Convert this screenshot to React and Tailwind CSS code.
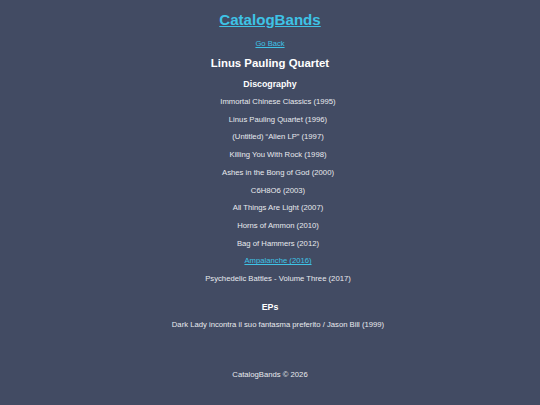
const albums = [
  { title: 'Immortal Chinese Classics (1995)' },
  { title: 'Linus Pauling Quartet (1996)' },
  { title: '(Untitled) \u201cAlien LP\u201d (1997)' },
  { title: 'Killing You With Rock (1998)' },
  { title: 'Ashes in the Bong of God (2000)' },
  { title: 'C6H8O6 (2003)' },
  { title: 'All Things Are Light (2007)' },
  { title: 'Horns of Ammon (2010)' },
  { title: 'Bag of Hammers (2012)' },
  { title: 'Ampalanche (2016)', link: true },
  { title: 'Psychedelic Battles - Volume Three (2017)' },
];

const eps = ['Dark Lady incontra il suo fantasma preferito / Jason Bill (1999)'];

export default function App() {
  return (
    <div className="min-h-[405px] bg-[#424b63] text-[#e8eaee] text-center font-['Liberation_Sans',Arial,sans-serif] flex flex-col">
      <header className="pt-[8px]">
        <a href="#" className="text-[15.1px] font-bold leading-[20px] text-[#3ec3e6] underline">
          CatalogBands
        </a>
      </header>
      <main className="flex-1">
        <div className="mt-[3px] leading-[12px]">
          <a href="#" className="text-[7.6px] text-[#3ec3e6] underline">Go Back</a>
        </div>
        <h2 className="mt-[5px] text-[11.4px] font-bold leading-[16px] text-white">Linus Pauling Quartet</h2>
        <h3 className="mt-[7px] text-[8.8px] font-bold leading-[12px] text-white">Discography</h3>
        <ul className="mt-[3px] pl-[16px] text-[7.7px] leading-[17.7px]">
          {albums.map(a => (
            <li key={a.title}>
              {a.link ? (
                <a href="#" className="text-[#3ec3e6] underline">{a.title}</a>
              ) : (
                a.title
              )}
            </li>
          ))}
        </ul>
        <h3 className="mt-[13px] text-[8.8px] font-bold leading-[12px] text-white">EPs</h3>
        <ul className="mt-[3px] pl-[16px] text-[7.7px] leading-[17.7px]">
          {eps.map(e => <li key={e}>{e}</li>)}
        </ul>
      </main>
      <footer className="pb-[24px] text-[7.7px] leading-[12px]">CatalogBands © 2026</footer>
    </div>
  );
}
